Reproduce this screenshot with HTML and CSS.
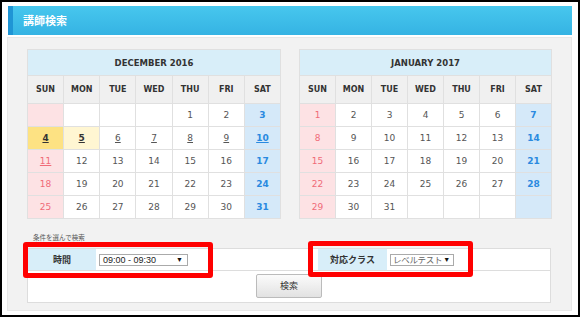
FILE: index.html
```html
<!DOCTYPE html>
<html lang="ja">
<head>
    <meta charset="UTF-8">
    <title>講師検索</title>
    <link rel="stylesheet" href="styles.css">
</head>
<body>
<div class="frame">
    <h2 class="head">講師検索</h2>
    <div class="panel">
        <div class="cals">
            <table class="cal">
                <tr><th colspan="7" class="month">DECEMBER 2016</th></tr>
                <tr class="week"><th>SUN</th><th>MON</th><th>TUE</th><th>WED</th><th>THU</th><th>FRI</th><th>SAT</th></tr>
                <tr><td class="sun"></td><td></td><td></td><td></td><td>1</td><td>2</td><td class="sat">3</td></tr>
                <tr><td class="today"><a>4</a></td><td class="next"><a>5</a></td><td><a>6</a></td><td><a>7</a></td><td><a>8</a></td><td><a>9</a></td><td class="sat"><a>10</a></td></tr>
                <tr><td class="sun"><a>11</a></td><td>12</td><td>13</td><td>14</td><td>15</td><td>16</td><td class="sat">17</td></tr>
                <tr><td class="sun">18</td><td>19</td><td>20</td><td>21</td><td>22</td><td>23</td><td class="sat">24</td></tr>
                <tr><td class="sun">25</td><td>26</td><td>27</td><td>28</td><td>29</td><td>30</td><td class="sat">31</td></tr>
            </table>
            <table class="cal">
                <tr><th colspan="7" class="month">JANUARY 2017</th></tr>
                <tr class="week"><th>SUN</th><th>MON</th><th>TUE</th><th>WED</th><th>THU</th><th>FRI</th><th>SAT</th></tr>
                <tr><td class="sun">1</td><td>2</td><td>3</td><td>4</td><td>5</td><td>6</td><td class="sat">7</td></tr>
                <tr><td class="sun">8</td><td>9</td><td>10</td><td>11</td><td>12</td><td>13</td><td class="sat">14</td></tr>
                <tr><td class="sun">15</td><td>16</td><td>17</td><td>18</td><td>19</td><td>20</td><td class="sat">21</td></tr>
                <tr><td class="sun">22</td><td>23</td><td>24</td><td>25</td><td>26</td><td>27</td><td class="sat">28</td></tr>
                <tr><td class="sun">29</td><td>30</td><td>31</td><td></td><td></td><td></td><td class="sat"></td></tr>
            </table>
        </div>
        <p class="cond">条件を選んで検索</p>
        <div class="search">
            <table class="opts">
                <tr>
                    <th class="l1">時間</th>
                    <td class="v1"><span class="sel sel-time">09:00 - 09:30<i>▼</i></span></td>
                    <th class="l2">対応クラス</th>
                    <td><span class="sel sel-class">レベルテスト<i>▼</i></span></td>
                </tr>
            </table>
            <div class="btnrow"><button class="btn">検索</button></div>
        </div>
    </div>
    <!-- 注釈の赤枠 -->
    <div class="mark mark1"></div>
    <div class="mark mark2"></div>
</div>
</body>
</html>
```

FILE: styles.css
```css
*{
    margin: 0;
    padding: 0;
    box-sizing: border-box;
}
body{
    background: #fff;
    font-family: "DejaVu Sans", "Noto Sans CJK JP", sans-serif;
}
.frame{
    width: 580px;
    height: 317px;
    border: solid 2px #000;
    position: relative;
    padding: 4px 6px 0 5px;
}
.head{
    height: 29px;
    margin-left: 1px;
    background: linear-gradient(#47c7ee, #35b3e3);
    border-left: 5px solid #1f95d5;
    color: #fff;
    font-size: 11px;
    font-weight: bold;
    font-family: "Noto Sans CJK JP", sans-serif;
    line-height: 29px;
    padding-left: 10px;
}
.panel{
    margin-top: 2px;
    background: #f2f2f2;
    border: 1px solid #e8e8e8;
    height: 274px;
    padding: 11px 19px 0;
}
.cals{
    display: flex;
    gap: 18px;
}
.cal{
    width: 254px;
    border-collapse: collapse;
    table-layout: fixed;
    color: #555;
}
.cal:last-child{
    width: 253px;
}
.cal th, .cal td{
    border: 1px solid #e0e0e0;
    text-align: center;
}
.cal .month{
    height: 26px;
    background: #d8eef9;
    color: #333;
    font-size: 8.5px;
}
.week th{
    height: 28px;
    background: #f0f0f0;
    color: #333;
    font-size: 8px;
}
.cal td{
    height: 23px;
    background: #fff;
    font-size: 9px;
}
.cal td a{
    text-decoration: underline;
}
.cal .sun{
    background: #fde2e4;
    color: #f06b78;
}
.cal .sat{
    background: #d5e9f9;
    color: #2a8ae0;
    font-weight: bold;
}
.cal .today{
    background: #fde283;
    color: #333;
    font-weight: bold;
}
.cal .next{
    background: #fff6d2;
    color: #333;
    font-weight: bold;
}
.cond{
    margin: 13px 0 0 6px;
    height: 16px;
    font-size: 6.5px;
    color: #555;
    font-family: "Noto Sans CJK JP", sans-serif;
    line-height: 10px;
}
.search{
    width: 524px;
    background: #fff;
    border: 1px solid #ddd;
}
.opts{
    width: 100%;
    border-collapse: collapse;
    table-layout: fixed;
    font-family: "Noto Sans CJK JP", sans-serif;
}
.opts th, .opts td{
    height: 21px;
    border-bottom: 1px solid #ddd;
    font-size: 9px;
}
.opts th{
    background: #d8eef9;
    color: #333;
}
.opts td{
    padding-left: 3px;
}
.l1{ width: 68px; }
.v1{ width: 222px; }
.l2{ width: 69px; }
.sel{
    display: inline-flex;
    align-items: center;
    justify-content: space-between;
    height: 12px;
    border: 1px solid #aaa;
    background: #fff;
    font-family: "Liberation Sans", "Noto Sans CJK JP", sans-serif;
    font-size: 9px;
    line-height: 10px;
    white-space: nowrap;
    color: #222;
    padding: 0 4px 0 3px;
    vertical-align: middle;
}
.sel i{
    font-style: normal;
    font-size: 7px;
    color: #111;
}
.sel-time{ width: 89px; }
.sel-class{
    width: 64px;
    color: #666;
    font-size: 8.5px;
    padding: 0 3px 0 2px;
    letter-spacing: -0.3px;
}
.btnrow{
    height: 31px;
    padding-top: 3px;
    text-align: center;
}
.btn{
    width: 66px;
    height: 24px;
    border: 1px solid #bbb;
    border-radius: 2px;
    background: linear-gradient(#fbfbfb, #e2e2e2);
    color: #333;
    font-size: 9px;
    font-family: "Noto Sans CJK JP", sans-serif;
}
.mark{
    position: absolute;
    border: 5px solid #ff0000;
    border-radius: 3px;
}
.mark1{
    left: 21px;
    top: 240px;
    width: 190px;
    height: 36px;
}
.mark2{
    left: 306px;
    top: 239px;
    width: 165px;
    height: 36px;
}
```
